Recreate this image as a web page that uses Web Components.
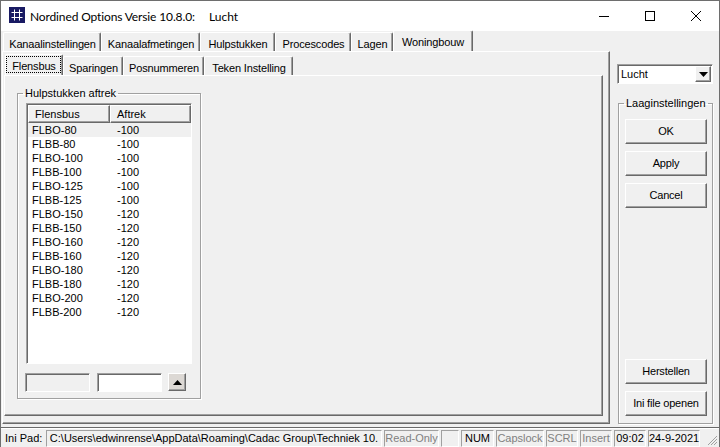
<!DOCTYPE html>
<html><head><meta charset="utf-8">
<style>
html,body{margin:0;padding:0;background:#f0f0f0;}
body{font:11px/13px "Liberation Sans",Arial,sans-serif;color:#000;}
</style></head><body>
<win-frame>
  <win-titlebar slot="title" caption="Nordined Options Versie 10.8.0:" doc="Lucht"></win-titlebar>
  <win-tabs slot="left" kind="outer">
    <win-tab slot="tabs" w="98">Kanaalinstellingen</win-tab>
    <win-tab slot="tabs" w="99">Kanaalafmetingen</win-tab>
    <win-tab slot="tabs" w="75">Hulpstukken</win-tab>
    <win-tab slot="tabs" w="76">Procescodes</win-tab>
    <win-tab slot="tabs" w="42">Lagen</win-tab>
    <win-tab slot="tabs" w="80" active>Woningbouw</win-tab>
    <win-tabs kind="inner">
      <win-tab slot="tabs" w="58" active focus>Flensbus</win-tab>
      <win-tab slot="tabs" w="60">Sparingen</win-tab>
      <win-tab slot="tabs" w="81">Posnummeren</win-tab>
      <win-tab slot="tabs" w="89">Teken Instelling</win-tab>
      <win-group label="Hulpstukken aftrek" class="g1">
        <win-list></win-list>
        <win-editrow></win-editrow>
      </win-group>
    </win-tabs>
  </win-tabs>
  <win-side slot="right"></win-side>
  <win-status slot="status"></win-status>
</win-frame>
<script>
function def(name, css, html, init){
  customElements.define(name, class extends HTMLElement{
    connectedCallback(){
      if(this.shadowRoot) return;
      const r=this.attachShadow({mode:'open'});
      r.innerHTML='<style>'+css+'</style>'+(typeof html==='function'?html(this):html);
      if(init) init(this,r);
    }
  });
}
const SUNKEN='border:1px solid;border-color:#a0a0a0 #fff #fff #a0a0a0;box-shadow:inset 1px 1px 0 #696969;';
def('win-frame',`
  :host{display:grid;box-sizing:border-box;width:720px;height:447px;border:1px solid #6e6e6e;border-bottom:0;background:#f0f0f0;
    grid-template-columns:609px 1fr;grid-template-rows:30px 1fr 20px;overflow:hidden}
  .t{grid-column:1/3}.s{grid-column:1/3}
`,`<div class="t"><slot name="title"></slot></div><div class="l"><slot name="left"></slot></div><div><slot name="right"></slot></div><div class="s"><slot name="status"></slot></div>`);

def('win-titlebar',`
  :host{display:flex;align-items:center;height:30px;background:#fff;font:12px Lato,"Noto Sans",sans-serif;color:#000;box-sizing:border-box}
  svg{display:block;margin:0 5px 2px 8px;flex:none}
  .c{width:179px;white-space:nowrap;letter-spacing:-.13px}
  .d{flex:1;color:#000}
  .b{width:46px;height:30px;display:flex;align-items:center;justify-content:center}
  .b svg{margin:0}
  .cap{margin-top:1px}
`,t=>`
  <svg width="16" height="16" viewBox="0 0 16 16"><rect width="16" height="16" fill="#191a63"/><path d="M2.5 5.5H13.5M2.5 10.5H13.5M5.5 2.5V13.5M10.5 2.5V13.5" stroke="#fff" fill="none"/></svg>
  <span class="c cap">${t.getAttribute('caption')}</span><span class="d cap">${t.getAttribute('doc')}</span>
  <span class="b"><svg width="10" height="10" viewBox="0 0 10 10"><path d="M0 5.5H10" stroke="#000"/></svg></span>
  <span class="b"><svg width="10" height="10" viewBox="0 0 10 10"><rect x=".5" y=".5" width="9" height="9" fill="none" stroke="#000"/></svg></span>
  <span class="b"><svg width="10" height="10" viewBox="0 0 10 10"><path d="M0 0L10 10M10 0L0 10" stroke="#000" stroke-width="1"/></svg></span>`);

def('win-tabs',`
  :host{display:block;box-sizing:border-box}
  :host([kind=outer]){height:393px;width:609px;padding:1px 0 0 1px}
  :host([kind=inner]){width:600px;height:360px;padding:4px 0 0 1px}
  .strip{display:flex;height:19px;padding-left:1px;position:relative;z-index:1}
  .panel{box-sizing:border-box;border:1px solid;border-color:#fff #696969 #696969 #fff;box-shadow:inset -1px -1px 0 #a0a0a0;margin-top:0}
  :host([kind=outer]) .panel{height:373px;width:608px}
  :host([kind=inner]) .panel{height:341px;width:599px;position:relative;padding-top:.02px}
`,`<div class="strip"><slot name="tabs"></slot></div><div class="panel"><slot></slot></div>`);

def('win-tab',`
  :host{display:block;box-sizing:border-box;height:19px;flex:none;border:1px solid;border-color:#fff #696969 transparent #fff;border-bottom:0;box-shadow:inset -1px 0 0 #a0a0a0;text-align:center;padding:5px 0 0 1px;white-space:nowrap;border-radius:2px 2px 0 0;background:#f0f0f0;letter-spacing:-.15px;position:relative}
  :host([active]){height:21px;margin-top:-2px;margin-bottom:-1px;padding-top:5px;padding-left:0;z-index:2}
  :host([focus])::after{content:"";position:absolute;inset:1px 1px 2px 0;border:1px dotted #000}
`,t=>{t.style.width=t.getAttribute('w')+'px';return '<slot></slot>';});

def('win-group',`
  :host{display:block;box-sizing:border-box}
  :host(.g1){width:184px;height:312px;margin:11px 0 0 12px}
  :host(.g2){width:95px;height:327px;margin:13px 0 0 1px}
  fieldset{box-sizing:border-box;height:100%;margin:0;padding:0;border:1px solid #a0a0a0;box-shadow:1px 1px 0 #fff,inset 1px 1px 0 #fff;min-width:0}
  legend{margin-left:5px;padding:0 2px;line-height:13px;height:13px;white-space:nowrap}
`,t=>`<fieldset><legend>${t.getAttribute('label')}</legend><slot></slot></fieldset>`);

const rows=[['FLBO-80',-100],['FLBB-80',-100],['FLBO-100',-100],['FLBB-100',-100],['FLBO-125',-100],['FLBB-125',-100],['FLBO-150',-120],['FLBB-150',-120],['FLBO-160',-120],['FLBB-160',-120],['FLBO-180',-120],['FLBB-180',-120],['FLBO-200',-120],['FLBB-200',-120]];
def('win-list',`
  :host{display:block;box-sizing:border-box;width:166px;height:261px;margin:3px 0 0 8px;${SUNKEN}background:#fff;padding:1px 0 0 1px}
  .h{display:flex;height:18px;background:#f0f0f0}
  .h div{box-sizing:border-box;height:18px;padding:2px 0 0 6px;border:1px solid;border-color:#fff #696969 #696969 #fff;box-shadow:inset -1px -1px 0 #a0a0a0}
  .h .a{width:82px}.h .b{width:81px}
  .r{display:flex;height:14px;line-height:14px;padding-left:4px}
  .r span:first-child{width:85px}
  .r.s{background:#f0f0f0}
`,()=>`<div class="h"><div class="a">Flensbus</div><div class="b">Aftrek</div></div>`+rows.map((r,i)=>`<div class="r${i?'':' s'}"><span>${r[0]}</span><span>${r[1]}</span></div>`).join(''));

def('win-editrow',`
  :host{display:flex;margin:9px 0 0 7px;align-items:flex-start}
  .e{box-sizing:border-box;width:65px;height:19px;${SUNKEN}}
  .e.d{background:#f0f0f0;margin-right:7px}
  .e.w{background:#fff;margin-right:6px}
  .sp{box-sizing:border-box;width:18px;height:18px;border:1px solid;border-color:#fff #696969 #696969 #fff;box-shadow:inset -1px -1px 0 #a0a0a0;background:#dcd8d4;display:flex;align-items:center;justify-content:center}
  svg{display:block}
`,`<div class="e d"></div><div class="e w"></div><div class="sp"><svg width="9" height="5" viewBox="0 0 9 5"><path d="M4.5 0L9 5H0Z" fill="#000"/></svg></div>`);

def('win-button',`
  :host{display:flex;align-items:center;justify-content:center;box-sizing:border-box;width:82px;height:25px;border:1px solid;border-color:#fff #696969 #696969 #fff;box-shadow:inset -1px -1px 0 #a0a0a0;background:#f0f0f0;white-space:nowrap;letter-spacing:-.2px}
`,`<slot></slot>`);

def('win-combo',`
  :host{display:flex;box-sizing:border-box;width:96px;height:20px;${SUNKEN}background:#fff;padding:1px 1px 1px 3px;align-items:center}
  span{flex:1}
  .b{flex:none;box-sizing:border-box;width:16px;height:16px;border:1px solid;border-color:#fff #696969 #696969 #fff;box-shadow:inset -1px -1px 0 #a0a0a0;background:#f0f0f0;display:flex;align-items:center;justify-content:center}
  svg{display:block}
`,`<span><slot></slot></span><div class="b"><svg width="9" height="5" viewBox="0 0 9 5"><path d="M0 0H9L4.5 5Z"/></svg></div>`);

def('win-side',`
  :host{display:block;box-sizing:border-box;height:393px;padding:33px 0 0 7px}
  .stack{display:flex;flex-direction:column;align-items:flex-start;height:100%;padding:9px 0 7px 6px;box-sizing:border-box}
  .sp{flex:1}
  win-button+win-button{margin-top:7px}
`,`<win-combo>Lucht</win-combo>
  <win-group class="g2" label="Laaginstellingen"><div class="stack">
    <win-button>OK</win-button><win-button>Apply</win-button><win-button>Cancel</win-button>
    <div class="sp"></div>
    <win-button>Herstellen</win-button><win-button>Ini file openen</win-button>
  </div></win-group>`);

def('win-status',`
  :host{display:flex;box-sizing:border-box;height:20px;width:718px;align-items:flex-end;padding-top:2px;border-top:1px solid #696969;box-shadow:inset 0 1px 0 #fff;padding-left:4px;white-space:nowrap;position:relative;overflow:hidden}
  .i{width:41px;padding-bottom:2px}
  .p{box-sizing:border-box;height:17px;margin-right:2px;border:1px solid;border-color:#a0a0a0 #fff #fff #a0a0a0;padding-top:1px;text-align:center;flex:none}
  .o{color:#808080}
  svg{position:absolute;right:1px;bottom:1px}
`,()=>{
  const p=[[336,'C:\\Users\\edwinrense\\AppData\\Roaming\\Cadac Group\\Techniek 10.'],[55,'Read-Only',1],[18,''],[33,'NUM'],[48,'Capslock',1],[32,'SCRL',1],[32,'Insert',1],[32,'09:02'],[52,'24-9-2021']];
  return `<span class="i">Ini Pad:</span>`+p.map(x=>`<span class="p${x[2]?' o':''}" style="width:${x[0]}px">${x[1]}</span>`).join('')+
  `<svg width="12" height="12" viewBox="0 0 12 12"><path d="M11 2L2 11M11 5L5 11M11 8L8 11" stroke="#a0a0a0" fill="none"/></svg>`;
});
</script>
</body></html>
